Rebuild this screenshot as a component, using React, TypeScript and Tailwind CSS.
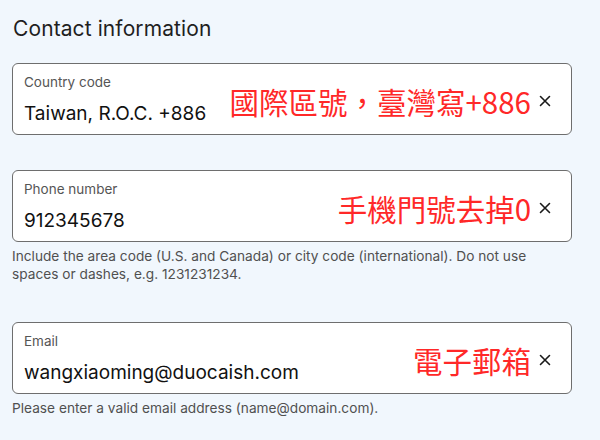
const fields = [
  {
    label: 'Country code',
    value: 'Taiwan, R.O.C. +886',
    note: '國際區號，臺灣寫+886',
    help: '',
  },
  {
    label: 'Phone number',
    value: '912345678',
    note: '手機門號去掉0',
    help: 'Include the area code (U.S. and Canada) or city code (international). Do not use spaces or dashes, e.g. 1231231234.',
  },
  {
    label: 'Email',
    value: 'wangxiaoming@duocaish.com',
    note: '電子郵箱',
    help: 'Please enter a valid email address (name@domain.com).',
  },
]

function CloseIcon() {
  return (
    <svg width="12" height="12" viewBox="0 0 12 12" className="text-[#1a1a1a]">
      <path d="M1.5 1.5 L10.5 10.5 M10.5 1.5 L1.5 10.5" stroke="currentColor" strokeWidth="1.6" strokeLinecap="round" />
    </svg>
  )
}

export default function App() {
  return (
    <div
      className="w-[600px] h-[440px] bg-[#f1f7fd] px-3 pt-[15px] overflow-hidden"
      style={{ fontFamily: 'Inter, "Noto Sans", sans-serif' }}
    >
      <h2 className="text-[21px] leading-7 tracking-[0.1px] text-[#1f1f1f] pl-px mb-[20px]">Contact information</h2>

      {fields.map((f) => (
        <div key={f.label} className={`w-[560px] ${f.help ? 'mb-[39px]' : 'mb-[35px]'}`}>
          <div className="h-[72px] bg-white border border-[#6e6e6e] rounded-[6px] pl-[11px] pr-[20px] flex items-center">
            <div className="flex-1 pt-[2px]">
              <div className="text-[13.5px] leading-4 text-[#555]">{f.label}</div>
              <div className="text-[19px] leading-6 text-[#111] mt-[12px]">{f.value}</div>
            </div>
            <div className="flex items-center gap-[8px] mt-[4px]">
              <span
                className="text-[29.5px] leading-8 text-[#ff2828]"
                style={{ fontFamily: '"Noto Sans CJK TC", sans-serif' }}
              >
                {f.note}
              </span>
              <CloseIcon />
            </div>
          </div>
          {f.help && (
            <p className="text-[13.7px] leading-[18px] text-[#505050] mt-[5px] pr-4">{f.help}</p>
          )}
        </div>
      ))}
    </div>
  )
}
